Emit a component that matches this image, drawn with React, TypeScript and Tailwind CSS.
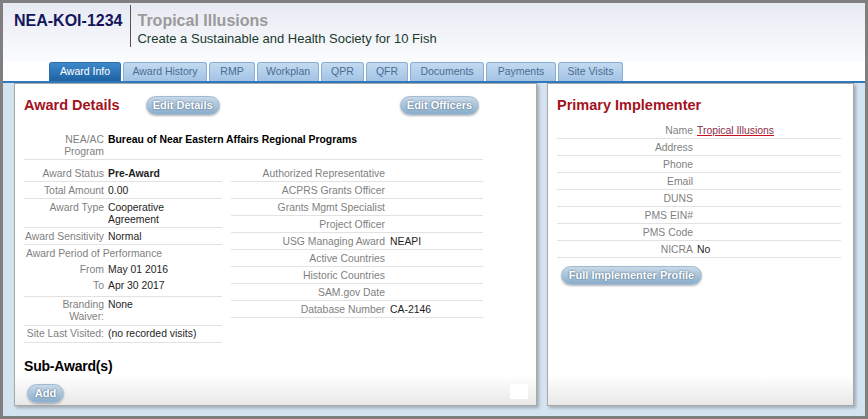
const tabs = [
  { name: "Award Info", w: "w-[72px]", active: true },
  { name: "Award History", w: "w-[84px]" },
  { name: "RMP", w: "w-[46px]" },
  { name: "Workplan", w: "w-[62px]" },
  { name: "QPR", w: "w-[43px]" },
  { name: "QFR", w: "w-[42px]" },
  { name: "Documents", w: "w-[74px]" },
  { name: "Payments", w: "w-[70px]" },
  { name: "Site Visits", w: "w-[65px]" },
];

const officers: [string, string][] = [
  ["Authorized Representative", ""],
  ["ACPRS Grants Officer", ""],
  ["Grants Mgmt Specialist", ""],
  ["Project Officer", ""],
  ["USG Managing Award", "NEAPI"],
  ["Active Countries", ""],
  ["Historic Countries", ""],
  ["SAM.gov Date", ""],
  ["Database Number", "CA-2146"],
];

const implementer = ["Address", "Phone", "Email", "DUNS", "PMS EIN#", "PMS Code"];

const PillButton = ({ label, className = "" }: { label: string; className?: string }) => (
  <button
    type="button"
    className={
      "h-[19px] rounded-full border border-[#a3bbd0] bg-[linear-gradient(to_bottom,#c8d9e8,#8aadcb)] text-[11px] font-bold leading-none text-white shadow-[0_1px_2px_rgba(0,0,0,0.3)] [text-shadow:0_0_2px_rgba(30,60,90,0.8)] " +
      className
    }
  >
    {label}
  </button>
);

const Row = ({ label, children, cols }: { label: React.ReactNode; children?: React.ReactNode; cols: string }) => (
  <div className={"grid border-b border-[#e2e2e2] pb-[1.5px] pt-[2.5px] leading-[12px] " + cols}>
    <div className="text-right text-[#7f7f7f]">{label}</div>
    <div className="text-[#1e1e1e]">{children}</div>
  </div>
);

export default function App() {
  return (
    <div className="h-[419px] w-[868px] bg-[#7f7f7f] p-[3px] font-['Liberation_Sans',Arial,sans-serif]">
      <div className="flex h-full flex-col bg-white">
        {/* header */}
        <div className="flex h-[59px] shrink-0 bg-[linear-gradient(to_bottom,#e7eaf3,#fbfcfe)] pl-[11px] pt-[2px]">
          <div className="mt-[6px] text-[16px] font-bold leading-[20px] text-[#15155c]">NEA-KOI-1234</div>
          <div className="ml-[8px] h-[42px] w-px bg-[#555]" />
          <div className="pl-[6px]">
            <div className="mt-[7px] text-[16px] font-bold leading-[18px] text-[#9a9a9a]">Tropical Illusions</div>
            <div className="mt-px text-[13px] leading-[16px] text-[#1a3a2c]">
              Create a Sustainable and Health Society for 10 Fish
            </div>
          </div>
        </div>

        {/* tabs */}
        <div className="flex h-[19px] shrink-0 items-end gap-[2px] pl-[46px]">
          {tabs.map((t) => (
            <div
              key={t.name}
              className={
                "flex h-[19px] items-center justify-center rounded-t-[3px] border border-b-0 text-[10.5px] " +
                t.w +
                (t.active
                  ? " border-[#2a6eaf] bg-[linear-gradient(to_bottom,#3f89ca,#1d63a4)] text-white"
                  : " border-[#88aed4] bg-[linear-gradient(to_bottom,#c3daf0,#a3c3e5)] text-[#4a6c93]")
              }
            >
              {t.name}
            </div>
          ))}
        </div>
        <div className="h-[2px] shrink-0 bg-[#2f79bf]" />

        {/* content */}
        <div className="flex min-h-0 flex-1 gap-[10px] bg-[#d4e3f0] px-[11px] pb-[10px] text-[10.4px]">
          {/* award details */}
          <div className="flex w-[523px] flex-col border border-[#a8a8a8] bg-[linear-gradient(180deg,#fff_0%,#fff_calc(100%_-_30px),#e8e8e8_100%)] pl-[9px] pr-[8px] pt-[12px] shadow-[2px_2px_3px_rgba(0,0,0,0.25)]">
            <div className="flex h-[19px] w-[459px] items-center">
              <h2 className="text-[14.5px] font-bold text-[#a3121d]">Award Details</h2>
              <PillButton label="Edit Details" className="ml-[26px] w-[74px]" />
              <PillButton label="Edit Officers" className="ml-auto mr-[4px] w-[79px]" />
            </div>

            <div className="mt-[16px] w-[459px]">
              <Row cols="grid-cols-[80px_1fr] gap-x-[4px]" label={<>NEA/AC<br />Program</>}>
                <span className="font-bold text-black">Bureau of Near Eastern Affairs Regional Programs</span>
              </Row>
            </div>

            <div className="mt-[5px] flex gap-[9px]">
              <div className="w-[198px]">
                <Row cols="grid-cols-[80px_1fr] gap-x-[4px]" label="Award Status">
                  <span className="font-bold">Pre-Award</span>
                </Row>
                <Row cols="grid-cols-[80px_1fr] gap-x-[4px]" label="Total Amount">0.00</Row>
                <Row cols="grid-cols-[80px_1fr] gap-x-[4px]" label="Award Type">
                  Cooperative<br />Agreement
                </Row>
                <Row cols="grid-cols-[80px_1fr] gap-x-[4px]" label="Award Sensitivity">Normal</Row>
                <div className="border-b border-[#e2e2e2] pb-[2px] pt-[2.5px]">
                  <div className="pl-[2px] leading-[12px] text-[#7f7f7f]">Award Period of Performance</div>
                  <div className="mt-[2px] grid grid-cols-[80px_1fr] gap-x-[4px] leading-[16px]">
                    <div className="text-right text-[#7f7f7f]">From</div>
                    <div className="text-[#1e1e1e]">May 01 2016</div>
                    <div className="text-right text-[#7f7f7f]">To</div>
                    <div className="text-[#1e1e1e]">Apr 30 2017</div>
                  </div>
                </div>
                <Row cols="grid-cols-[80px_1fr] gap-x-[4px]" label={<>Branding<br />Waiver:</>}>None</Row>
                <Row cols="grid-cols-[80px_1fr] gap-x-[4px]" label="Site Last Visited:">(no recorded visits)</Row>
              </div>

              <div className="w-[252px]">
                {officers.map(([label, value]) => (
                  <Row key={label} cols="grid-cols-[154px_1fr] gap-x-[5px]" label={label}>
                    {value}
                  </Row>
                ))}
              </div>
            </div>

            <h3 className="mt-[14px] text-[14px] font-bold leading-[18px] tracking-[-0.2px] text-black">Sub-Award(s)</h3>
            <div className="mt-[9px] flex items-start justify-between">
              <PillButton label="Add" className="ml-[3px] w-[37px]" />
              <div className="h-[15px] w-[18px] bg-white" />
            </div>
          </div>

          {/* primary implementer */}
          <div className="flex w-[307px] flex-col border border-[#a8a8a8] bg-[linear-gradient(180deg,#fff_0%,#fff_calc(100%_-_30px),#e8e8e8_100%)] pl-[9px] pt-[12px] shadow-[2px_2px_3px_rgba(0,0,0,0.25)]">
            <h2 className="flex h-[19px] items-center text-[14.5px] font-bold text-[#a3121d]">Primary Implementer</h2>
            <div className="mt-[7px] w-[284px]">
              <Row cols="grid-cols-[136px_1fr] gap-x-[4px]" label="Name">
                <span className="text-[#8c2b46] underline decoration-[#c8101e]">Tropical Illusions</span>
              </Row>
              {implementer.map((l) => (
                <Row key={l} cols="grid-cols-[136px_1fr] gap-x-[4px]" label={l} />
              ))}
              <Row cols="grid-cols-[136px_1fr] gap-x-[4px]" label="NICRA">No</Row>
            </div>
            <div className="mt-[8px]">
              <PillButton label="Full Implementer Profile" className="ml-[4px] w-[141px]" />
            </div>
          </div>
        </div>
      </div>
    </div>
  );
}
